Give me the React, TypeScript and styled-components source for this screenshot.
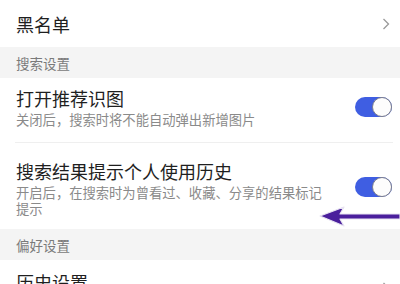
import React from "react";
import styled, { createGlobalStyle } from "styled-components";

const Global = createGlobalStyle`
  html, body { margin: 0; padding: 0; background: #fff; }
  body { font-family: "Noto Sans CJK SC", "Noto Sans", sans-serif; overflow: hidden; }
`;

const Page = styled.div`
  position: relative;
  width: 400px;
  height: 284px;
  overflow: hidden;
  background: #fff;
  display: flex;
  flex-direction: column;
`;

const Row = styled.div<{ $h?: number; $pt?: number; $pb?: number; $divider?: boolean }>`
  display: flex;
  align-items: center;
  justify-content: space-between;
  flex-shrink: 0;
  box-sizing: border-box;
  padding: ${(p) => p.$pt ?? 0}px 8px ${(p) => p.$pb ?? 0}px 16px;
  ${(p) => (p.$h ? `height: ${p.$h}px;` : "")}
  position: relative;
  ${(p) =>
    p.$divider
      ? `&::after { content: ""; position: absolute; left: 15px; right: 7px; bottom: 0; height: 1px; background: #efefef; }`
      : ""}
`;

const Texts = styled.div`
  display: flex;
  flex-direction: column;
  min-width: 0;
  flex: 1;
`;

const Title = styled.div`
  font-size: 18px;
  line-height: 24px;
  color: #1f1f1f;
`;

const Sub = styled.div`
  margin-top: 2px;
  font-size: 13.3px;
  line-height: 15.5px;
  color: #8a8a8a;
  width: 306px;
`;

const Section = styled.div<{ $h: number }>`
  height: ${(p) => p.$h}px;
  flex-shrink: 0;
  background: #f4f4f4;
  display: flex;
  align-items: center;
  padding-left: 16px;
  font-size: 13.5px;
  color: #7a7a7a;
`;

const Chevron = styled.span<{ $up?: number }>`
  margin-right: 2px;
  margin-top: ${(p) => p.$up ?? 0}px;
  display: flex;
`;

const Toggle = styled.div<{ $mt?: number }>`
  width: 37px;
  height: 20px;
  border-radius: 10px;
  background: #3f5ee2;
  position: relative;
  flex-shrink: 0;
  align-self: flex-start;
  margin-top: ${(p) => p.$mt ?? 0}px;
  &::after {
    content: "";
    position: absolute;
    right: 0;
    top: 0;
    width: 18px;
    height: 18px;
    border-radius: 50%;
    background: #fdfdfd;
    border: 1px solid #7d7f8c;
  }
`;

const Arrow = styled.svg`
  position: absolute;
  left: 318px;
  top: 204px;
`;

const ChevronIcon = () => (
  <svg width="8" height="12" viewBox="0 0 8 12">
    <path d="M1.5 1 L6.5 6 L1.5 11" fill="none" stroke="#9a9a9a" strokeWidth="1.3" />
  </svg>
);

export default function App() {
  return (
    <>
      <Global />
      <Page>
        <Row $h={47}>
          <Title>黑名单</Title>
          <Chevron>
            <ChevronIcon />
          </Chevron>
        </Row>
        <Section $h={31}>搜索设置</Section>
        <Row $h={65} $pt={8} $divider style={{ alignItems: "flex-start" }}>
          <Texts>
            <Title>打开推荐识图</Title>
            <Sub>关闭后，搜索时将不能自动弹出新增图片</Sub>
          </Texts>
          <Toggle $mt={11} />
        </Row>
        <Row $h={86} $pt={16} style={{ alignItems: "flex-start" }}>
          <Texts>
            <Title>搜索结果提示个人使用历史</Title>
            <Sub>开启后，在搜索时为曾看过、收藏、分享的结果标记提示</Sub>
          </Texts>
          <Toggle $mt={18} />
        </Row>
        <Section $h={31}>偏好设置</Section>
        <Row $h={40} $pt={10} style={{ alignItems: "flex-start" }}>
          <Title>历史设置</Title>
          <Chevron $up={12}>
            <ChevronIcon />
          </Chevron>
        </Row>
        <Arrow width="82" height="26" viewBox="0 0 82 26">
          <path
            d="M2 12 L26 3 L22 10 L82 10 L82 15 L22 15 L26 22 Z"
            fill="#4a1f9c"
            stroke="#e8e4f2"
            strokeWidth="1.2"
            strokeLinejoin="round"
          />
        </Arrow>
      </Page>
    </>
  );
}
